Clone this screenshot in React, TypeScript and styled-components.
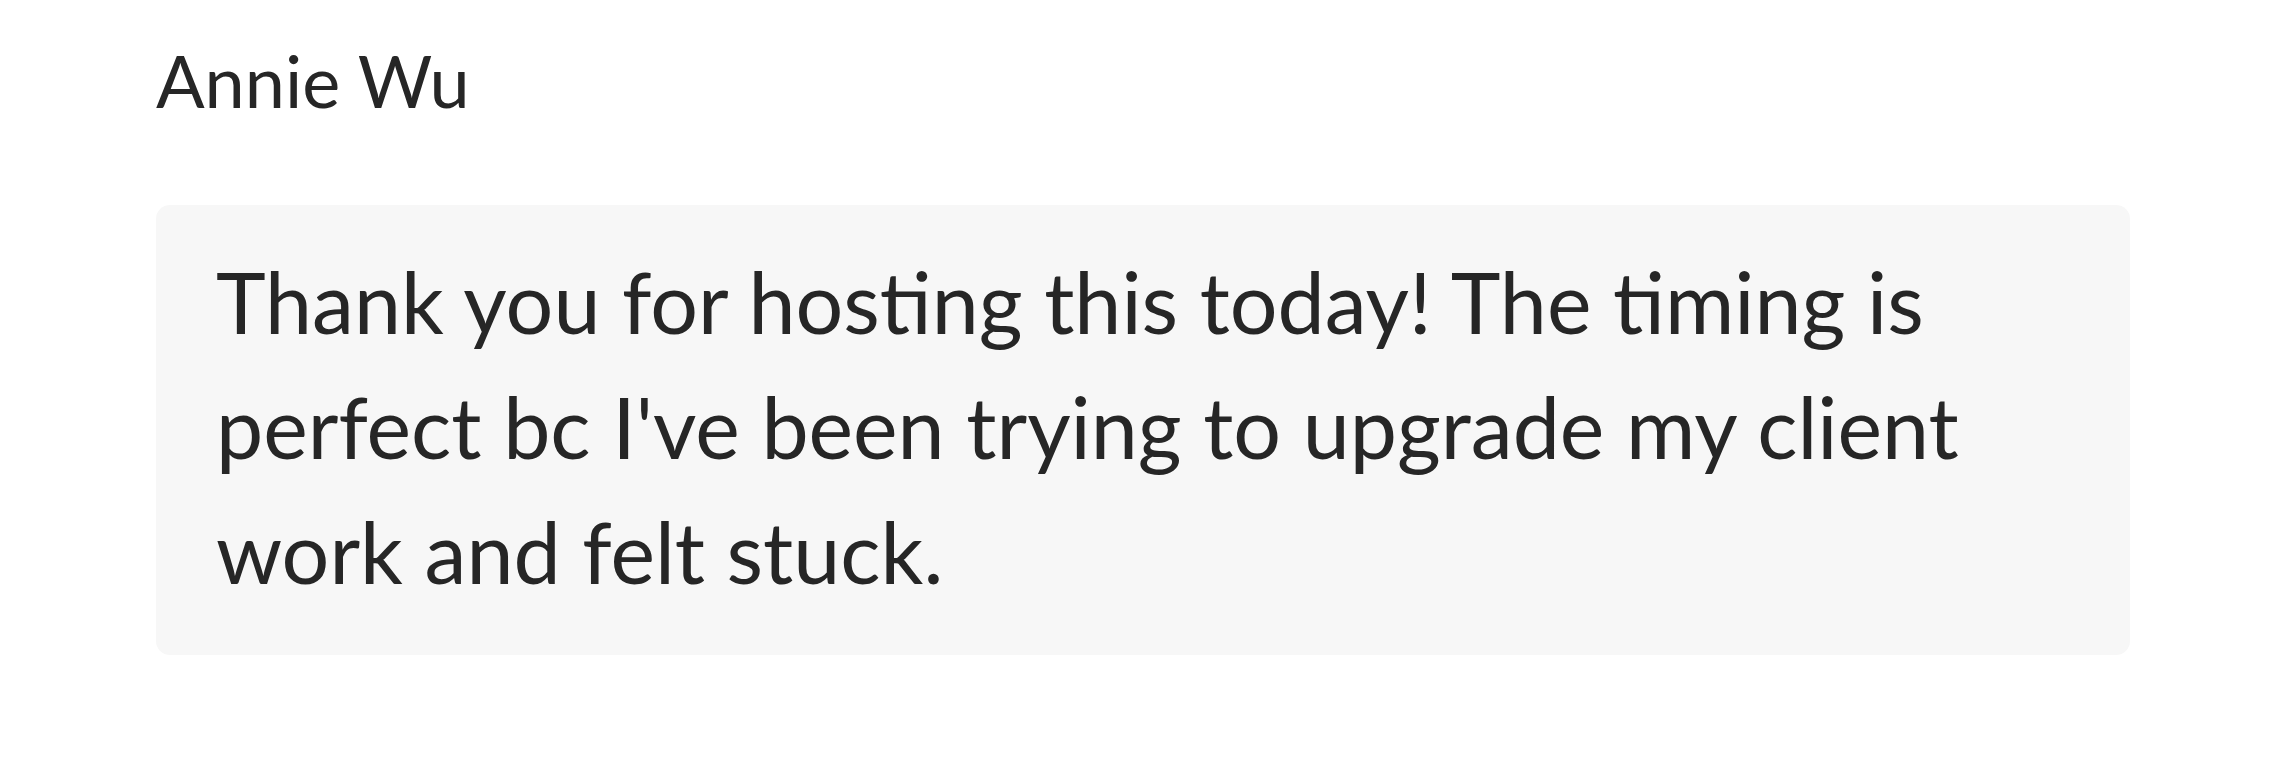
import styled, { createGlobalStyle } from 'styled-components';

const GlobalStyle = createGlobalStyle`
  body {
    margin: 0;
    background: #ffffff;
    font-family: Lato, "Noto Sans", sans-serif;
    color: #262626;
  }
`;

const Page = styled.div`
  padding: 38px 165px 0 156px;
  display: flex;
  flex-direction: column;
`;

const Name = styled.div`
  font-size: 72px;
  line-height: 84px;
  font-weight: 400;
  color: #262626;
`;

const Bubble = styled.div`
  margin-top: 83px;
  background: #f7f7f7;
  border-radius: 14px;
  padding: 34px 60px 41px 60px;
`;

const Message = styled.p`
  margin: 0;
  font-size: 84.3px;
  line-height: 125px;
  font-weight: 400;
  color: #262626;
  font-variant-ligatures: common-ligatures;
`;

function App() {
  return (
    <>
      <GlobalStyle />
      <Page>
        <Name>Annie Wu</Name>
        <Bubble>
          <Message>
            Thank you for hosting this today! The timing is perfect bc I've been
            trying to upgrade my client work and felt stuck.
          </Message>
        </Bubble>
      </Page>
    </>
  );
}

export default App;
